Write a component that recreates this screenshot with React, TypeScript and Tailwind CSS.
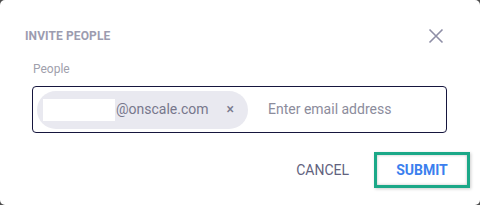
export default function App() {
  return (
    <div className="w-[480px] h-[205px] bg-[#4d4d4d]" style={{ fontFamily: 'Roboto, "Liberation Sans", sans-serif' }}>
      <div className="w-full h-full bg-white rounded-[5px] flex flex-col">
        <div className="flex items-center justify-between pt-[28px] pl-[25px] pr-[36px] h-[44px]">
          <span className="text-[12px] leading-[16px] font-bold text-[#9c9cb0] tracking-[0.1px]">INVITE PEOPLE</span>
          <svg width="16" height="16" viewBox="0 0 16 16" className="text-[#8e8ea6]">
            <path d="M1.5 1.5 L14.5 14.5 M14.5 1.5 L1.5 14.5" stroke="currentColor" strokeWidth="1.6" fill="none" />
          </svg>
        </div>
        <div className="mt-[17px] pl-[33px] text-[12px] leading-[16px] text-[#a0a0ac]">People</div>
        <div className="mt-[9px] ml-[32px] w-[415px] h-[47px] border border-[#16163e] rounded-[4px] flex items-center px-[4px]">
          <div className="h-[38px] w-[211px] rounded-full bg-[#e9e9f0] flex items-center pl-[6px]">
            <div className="w-[72px] h-[22px] bg-white" />
            <span className="ml-[1px] text-[14px] text-[#77778c]">@onscale.com</span>
            <span className="ml-[18px] text-[14px] font-medium text-[#7a7a8e]">×</span>
          </div>
          <span className="ml-[20px] text-[14px] text-[#8c8c9c]">Enter email address</span>
        </div>
        <div className="mt-[19px] flex justify-end items-center pr-[10px]">
          <span className="mr-[25px] text-[14px] text-[#62627e]">CANCEL</span>
          <div className="w-[96px] h-[36px] border-[3px] border-[#1ba888] flex items-center justify-center shadow-[inset_0_0_3px_rgba(0,0,0,0.25),1px_1px_3px_rgba(0,0,0,0.2)]">
            <span className="text-[14px] font-bold text-[#3b7fee]">SUBMIT</span>
          </div>
        </div>
      </div>
    </div>
  )
}
